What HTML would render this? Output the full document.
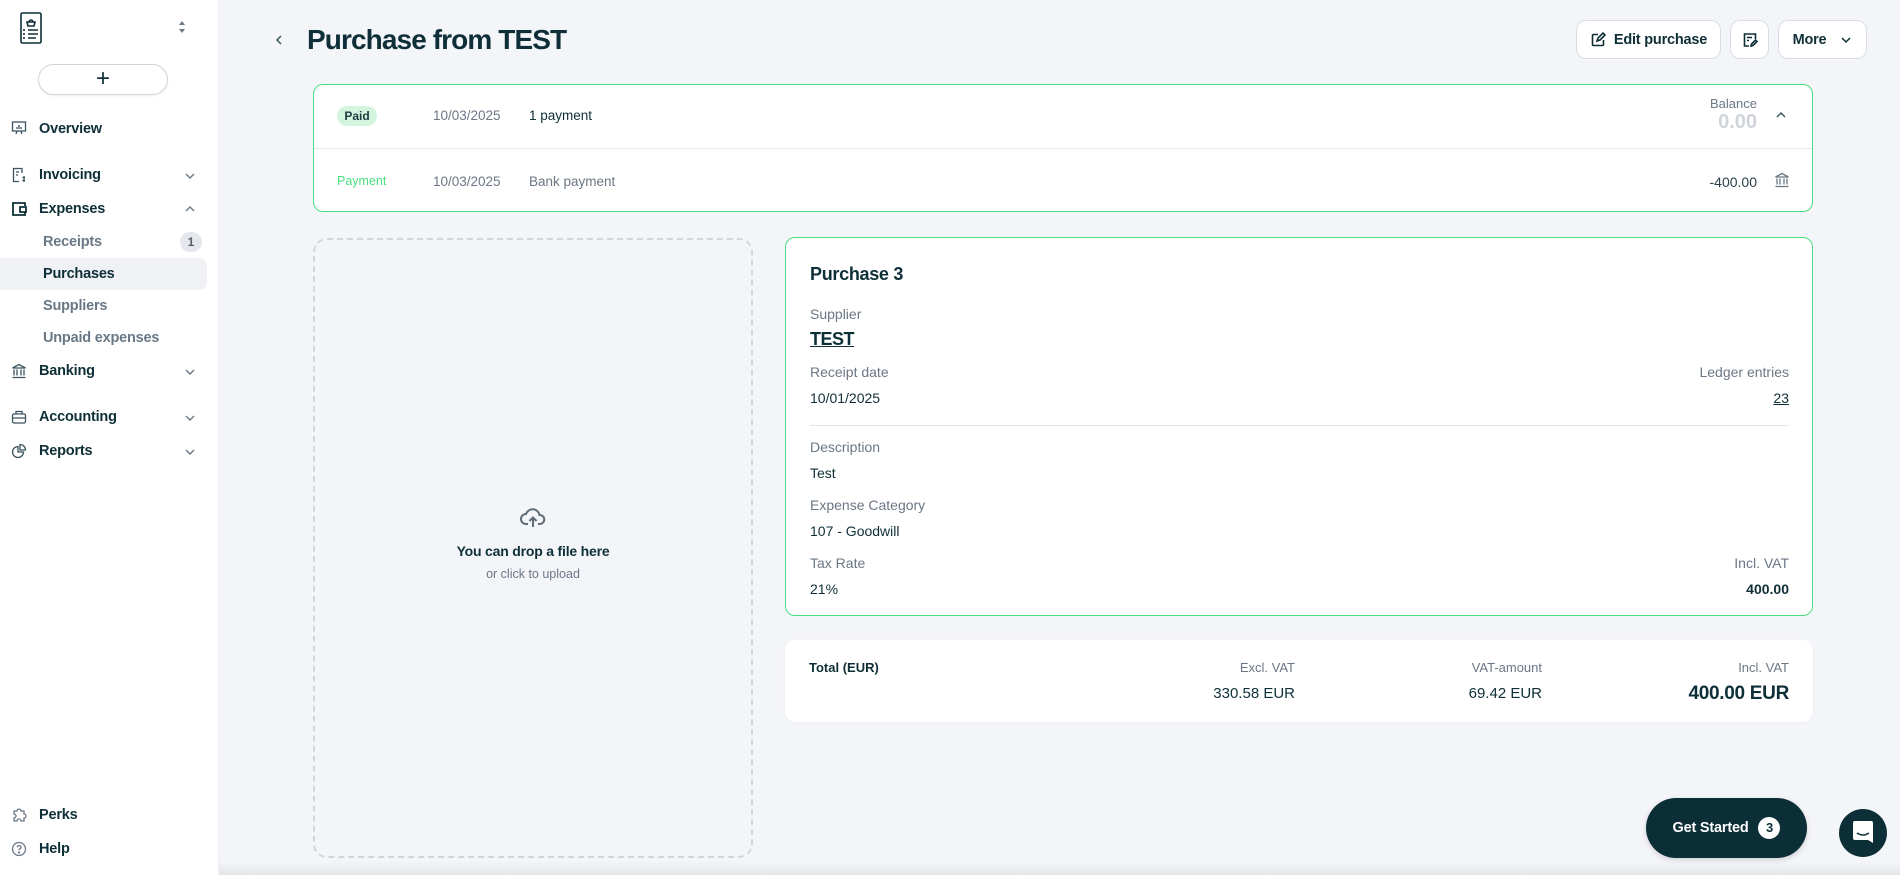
<!DOCTYPE html>
<html><head><meta charset="utf-8"><style>
*{box-sizing:border-box;margin:0;padding:0}
body{width:1900px;height:875px;overflow:hidden;background:#f4f5f9;font-family:"Liberation Sans",sans-serif;color:#0e2f37;position:relative;font-size:14px}
.abs{position:absolute;white-space:nowrap}
.side{position:absolute;left:0;top:0;width:219px;height:875px;background:#fff;border-right:1px solid #eceef2}
.nav{position:absolute;left:39px;font-weight:bold;font-size:14.5px;color:#0e2f37;letter-spacing:-0.2px;margin-top:1px}
.sub{position:absolute;left:43px;font-weight:bold;font-size:14.5px;color:#6a7886;letter-spacing:-0.2px;margin-top:1px}
.ico{position:absolute;left:11px;width:16px;height:16px}
.chev{position:absolute;left:184px;width:12px;height:12px}
.card{position:absolute;background:#fff;border-radius:10px}
.lbl{color:#6b7785;font-size:14px}
.btn{position:absolute;top:20px;height:39px;background:#fff;border:1px solid #d9dde3;border-radius:10px;font-weight:bold;font-size:14.5px;letter-spacing:-0.2px;display:flex;align-items:center;justify-content:center}
</style></head><body>
<div class="side">
<svg class="abs" style="left:20px;top:12px" width="22" height="32" viewBox="0 0 22 32" fill="none" stroke="#0e2f37" stroke-width="1.6"><rect x="1" y="1" width="20" height="30" rx="1.5"/><path d="M7 10h8l-1 4H8z M9 10a2 2 0 0 1 4 0"/><path d="M4 17v2M4 21v2M4 25v2M8 18h10M8 22h10M8 26h8"/></svg>
<svg class="abs" style="left:179px;top:21px" width="6" height="12" viewBox="0 0 6 12" fill="#6a7886"><path d="M3 0l3 4H0zM3 12l3-4H0z"/></svg>
<div class="abs" style="left:38px;top:64px;width:130px;height:31px;border:1px solid #cfd4da;border-radius:16px;box-shadow:0 1px 2px rgba(0,0,0,.06)"></div>
<div class="abs" style="left:96px;top:65px;font-size:24px;line-height:28px">+</div>
<svg class="ico" style="top:120px" viewBox="0 0 16 16" fill="none" stroke="#3d5560" stroke-width="1.3"><rect x="1.5" y="2" width="13" height="9"/><path d="M6 9V7M8 9V5M10 9V7M6 11l-1 3M10 11l1 3"/></svg>
<div class="nav" style="top:120px">Overview</div>
<svg class="ico" style="top:167px" viewBox="0 0 16 16" fill="none" stroke="#3d5560" stroke-width="1.3"><path d="M11 6V1.5H2.5v13H8"/><path d="M5 5h3M5 8h2M13 9v6M11.5 10.5h2.5M11.5 13.5h2.5"/></svg>
<div class="nav" style="top:166px">Invoicing</div>
<svg class="chev" style="top:170px" viewBox="0 0 12 12" fill="none" stroke="#6a7886" stroke-width="1.4"><path d="M2 4l4 4 4-4"/></svg>
<svg class="ico" style="top:201px" viewBox="0 0 16 16" fill="none" stroke="#0e2f37" stroke-width="1.8"><path d="M14 5V2H2v12h12v-3"/><path d="M9 6h6v5H9z"/></svg>
<div class="nav" style="top:200px">Expenses</div>
<svg class="chev" style="top:203px" viewBox="0 0 12 12" fill="none" stroke="#6a7886" stroke-width="1.4"><path d="M2 8l4-4 4 4"/></svg>
<div class="sub" style="top:233px">Receipts</div>
<div class="abs" style="left:180px;top:232px;width:22px;height:20px;border-radius:10px;background:#e4e7eb;font-size:12px;font-weight:bold;color:#555f6a;text-align:center;line-height:20px">1</div>
<div class="abs" style="left:0;top:258px;width:207px;height:32px;background:#f0f1f4;border-radius:0 8px 8px 0"></div>
<div class="sub" style="top:265px;color:#0e2f37">Purchases</div>
<div class="sub" style="top:297px">Suppliers</div>
<div class="sub" style="top:329px">Unpaid expenses</div>
<svg class="ico" style="top:363px" viewBox="0 0 16 16" fill="none" stroke="#3d5560" stroke-width="1.3"><path d="M1.5 5L8 1.5 14.5 5zM3 6.5v6M6 6.5v6M10 6.5v6M13 6.5v6M1.5 14.5h13"/></svg>
<div class="nav" style="top:362px">Banking</div>
<svg class="chev" style="top:366px" viewBox="0 0 12 12" fill="none" stroke="#6a7886" stroke-width="1.4"><path d="M2 4l4 4 4-4"/></svg>
<svg class="ico" style="top:409px" viewBox="0 0 16 16" fill="none" stroke="#3d5560" stroke-width="1.3"><rect x="1.5" y="5" width="13" height="9" rx="1.5"/><path d="M5 5V2.5h6V5M1.5 9h13"/></svg>
<div class="nav" style="top:408px">Accounting</div>
<svg class="chev" style="top:412px" viewBox="0 0 12 12" fill="none" stroke="#6a7886" stroke-width="1.4"><path d="M2 4l4 4 4-4"/></svg>
<svg class="ico" style="top:443px" viewBox="0 0 16 16" fill="none" stroke="#3d5560" stroke-width="1.3"><path d="M7 3.5a5.5 5.5 0 1 0 5.5 5.5H7z"/><path d="M9 1.5a5.5 5.5 0 0 1 5.5 5.5H9z"/></svg>
<div class="nav" style="top:442px">Reports</div>
<svg class="chev" style="top:446px" viewBox="0 0 12 12" fill="none" stroke="#6a7886" stroke-width="1.4"><path d="M2 4l4 4 4-4"/></svg>
<svg class="ico" style="top:807px" viewBox="0 0 16 16" fill="none" stroke="#6a7886" stroke-width="1.3"><path d="M3 4h3a2 2 0 1 1 4 0h3v3a2 2 0 1 1 0 4v3h-3a2 2 0 1 0-4 0H3v-3a2 2 0 1 0 0-4z"/></svg>
<div class="nav" style="top:806px">Perks</div>
<svg class="ico" style="top:841px" viewBox="0 0 16 16" fill="none" stroke="#6a7886" stroke-width="1.3"><circle cx="8" cy="8" r="6.5"/><path d="M6.3 6.3a1.8 1.8 0 1 1 2.4 1.7c-.5.2-.7.6-.7 1.2"/><circle cx="8" cy="11.5" r=".5" fill="#6a7886"/></svg>
<div class="nav" style="top:840px">Help</div>
</div>

<svg class="abs" style="left:273px;top:34px" width="12" height="12" viewBox="0 0 12 12" fill="none" stroke="#3d5560" stroke-width="1.5"><path d="M8 2L4 6l4 4"/></svg>
<div class="abs" style="left:307px;top:24px;font-size:28px;font-weight:bold;letter-spacing:-0.9px">Purchase from TEST</div>

<div class="btn" style="left:1576px;width:145px"><svg width="16" height="16" viewBox="0 0 16 16" fill="none" stroke="#0e2f37" stroke-width="1.6" style="margin-right:8px"><path d="M8 2.5H3.5a1 1 0 0 0-1 1v9a1 1 0 0 0 1 1h9a1 1 0 0 0 1-1V8"/><path d="M7 9l1-3 5-5 2 2-5 5z"/></svg>Edit purchase</div>
<div class="btn" style="left:1730px;width:39px"><svg width="16" height="16" viewBox="0 0 16 16" fill="none" stroke="#0e2f37" stroke-width="1.6"><path d="M7 14H2.5V2h11v5"/><path d="M5 5.5h5M5 8.5h2M9 14l.5-2 4-4 1.5 1.5-4 4z"/></svg></div>
<div class="btn" style="left:1778px;width:89px">More<svg width="12" height="12" viewBox="0 0 12 12" fill="none" stroke="#0e2f37" stroke-width="1.5" style="margin-left:14px"><path d="M2 4l4 4 4-4"/></svg></div>

<div class="card" style="left:313px;top:84px;width:1500px;height:128px;border:1.5px solid #4ade80">
<div style="position:absolute;left:0;right:0;top:63px;border-top:1px solid #e6e8ec"></div>
<div class="abs" style="left:23px;top:21px;width:40px;height:20px;border-radius:10px;background:#d3f5de;font-size:12px;font-weight:bold;text-align:center;line-height:20px;color:#1f3a40">Paid</div>
<div class="abs lbl" style="left:119px;top:23px;font-size:13.5px">10/03/2025</div>
<div class="abs" style="left:215px;top:23px;font-size:13.5px">1 payment</div>
<div class="abs lbl" style="right:55px;top:11px;font-size:13px">Balance</div>
<div class="abs" style="right:55px;top:26px;font-size:20px;font-weight:bold;color:#d0d4da">0.00</div>
<svg class="abs" style="right:25px;top:24px" width="12" height="12" viewBox="0 0 12 12" fill="none" stroke="#3d5560" stroke-width="1.5"><path d="M2 8l4-4 4 4"/></svg>
<div class="abs" style="left:23px;top:89px;color:#4ade80;font-size:12.5px">Payment</div>
<div class="abs lbl" style="left:119px;top:89px;font-size:13.5px">10/03/2025</div>
<div class="abs lbl" style="left:215px;top:89px;font-size:13.5px">Bank payment</div>
<div class="abs" style="right:55px;top:89px;color:#2a3f46">-400.00</div>
<svg class="abs" style="right:22px;top:87px" width="16" height="16" viewBox="0 0 16 16" fill="none" stroke="#6a7886" stroke-width="1.3"><path d="M1.5 5L8 1.5 14.5 5zM3 6.5v6M6 6.5v6M10 6.5v6M13 6.5v6M1.5 14.5h13"/></svg>
</div>

<div class="abs" style="left:313px;top:238px;width:440px;height:620px;border:2px dashed #d2d6dc;border-radius:14px"></div>
<svg class="abs" style="left:520px;top:507px" width="26" height="22" viewBox="0 0 26 22" fill="none" stroke="#5e6d78" stroke-width="2"><path d="M8 17H6a5 5 0 0 1 0-10 7 7 0 0 1 13.5 1A4.5 4.5 0 0 1 20 17h-2"/><path d="M13 20v-9M9.5 14l3.5-3.5 3.5 3.5"/></svg>
<div class="abs" style="left:313px;width:440px;text-align:center;top:543px;font-weight:bold;font-size:14px;letter-spacing:-0.2px">You can drop a file here</div>
<div class="abs lbl" style="left:313px;width:440px;text-align:center;top:567px;font-size:12.5px">or click to upload</div>

<div class="card" style="left:785px;top:237px;width:1028px;height:379px;border:1.5px solid #4ade80">
<div class="abs" style="left:24px;top:26px;font-size:18px;font-weight:bold;letter-spacing:-0.3px">Purchase 3</div>
<div class="abs lbl" style="left:24px;top:68px">Supplier</div>
<div class="abs" style="left:24px;top:91px;font-size:18px;font-weight:bold;text-decoration:underline;letter-spacing:-0.5px">TEST</div>
<div class="abs lbl" style="left:24px;top:126px">Receipt date</div>
<div class="abs" style="left:24px;top:152px">10/01/2025</div>
<div class="abs lbl" style="right:23px;top:126px">Ledger entries</div>
<div class="abs" style="right:23px;top:152px;text-decoration:underline">23</div>
<div style="position:absolute;left:24px;right:23px;top:187px;border-top:1px solid #e4e6ea"></div>
<div class="abs lbl" style="left:24px;top:201px">Description</div>
<div class="abs" style="left:24px;top:227px">Test</div>
<div class="abs lbl" style="left:24px;top:259px">Expense Category</div>
<div class="abs" style="left:24px;top:285px">107 - Goodwill</div>
<div class="abs lbl" style="left:24px;top:317px">Tax Rate</div>
<div class="abs" style="left:24px;top:343px">21%</div>
<div class="abs lbl" style="right:23px;top:317px">Incl. VAT</div>
<div class="abs" style="right:23px;top:343px;font-weight:bold">400.00</div>
</div>

<div class="card" style="left:785px;top:640px;width:1028px;height:82px;box-shadow:0 1px 2px rgba(0,0,0,.04)">
<div class="abs" style="left:24px;top:20px;font-weight:bold;font-size:13px">Total (EUR)</div>
<div class="abs lbl" style="right:518px;top:20px;font-size:13px">Excl. VAT</div>
<div class="abs" style="right:518px;top:45px;font-size:15px">330.58 EUR</div>
<div class="abs lbl" style="right:271px;top:20px;font-size:13px">VAT-amount</div>
<div class="abs" style="right:271px;top:45px;font-size:15px">69.42 EUR</div>
<div class="abs lbl" style="right:24px;top:20px;font-size:13px">Incl. VAT</div>
<div class="abs" style="right:24px;top:43px;font-size:19px;font-weight:bold;letter-spacing:-0.3px">400.00 EUR</div>
</div>

<div class="abs" style="left:219px;top:862px;width:1681px;height:13px;background:linear-gradient(#f4f5f9,#e3e5e9)"></div>
<div class="abs" style="left:1646px;top:798px;width:161px;height:60px;border-radius:30px;background:#0c2e36;color:#fff;font-weight:bold;font-size:14.5px;letter-spacing:-0.2px;display:flex;align-items:center;justify-content:center;box-shadow:0 2px 6px rgba(0,0,0,.15)">Get Started<span style="display:inline-block;width:22px;height:22px;border-radius:11px;background:#fff;color:#0c2e36;text-align:center;line-height:22px;margin-left:10px;font-size:13px">3</span></div>
<div class="abs" style="left:1839px;top:809px;width:48px;height:48px;border-radius:24px;background:#0c2e36"></div>
<svg class="abs" style="left:1853px;top:821px" width="20" height="22" viewBox="0 0 20 22"><path d="M2 0h16a2 2 0 0 1 2 2v20l-5-3H2a2 2 0 0 1-2-2V2a2 2 0 0 1 2-2z" fill="#fff"/><path d="M4 12q6 4 12 0" fill="none" stroke="#0c2e36" stroke-width="1.5"/></svg>
</body></html>
